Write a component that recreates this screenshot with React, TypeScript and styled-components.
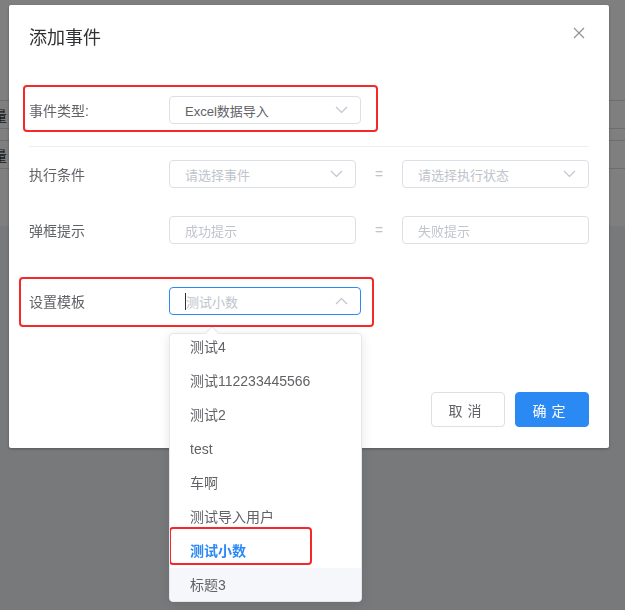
import React from "react";
import styled, { createGlobalStyle } from "styled-components";

const GlobalStyle = createGlobalStyle`
  html, body {
    margin: 0;
    padding: 0;
    width: 625px;
    height: 610px;
    overflow: hidden;
    font-family: "Liberation Sans", "Noto Sans CJK SC", sans-serif;
  }
`;

const BLUE = "#2b89f4";
const RED = "#f5282a";

const Page = styled.div`
  width: 625px;
  height: 610px;
  display: flex;
  flex-direction: column;
  background: #ffffff;
`;

const PageTop = styled.div`
  height: 226px;
  padding-top: 100px;
  box-sizing: border-box;
`;

const PageRow = styled.div<{ $gap?: number }>`
  height: 29px;
  margin-top: ${(p) => p.$gap || 0}px;
  border-top: 1px solid #d8dbe0;
  border-bottom: 1px solid #d8dbe0;
  box-sizing: border-box;
  display: flex;
  align-items: center;
  font-size: 14px;
  color: #333;
  margin-left: -7px;
`;

const PageBottom = styled.div`
  flex: 1;
  background: #f0f2f5;
`;

const Mask = styled.div`
  position: fixed;
  inset: 0;
  background: rgba(0, 0, 0, 0.5);
`;

const DialogLayer = styled.div`
  position: fixed;
  inset: 0;
  padding: 5px 0 0 9px;
`;

const Dialog = styled.div`
  width: 600px;
  background: #fff;
  border-radius: 2px;
  box-shadow: 0 1px 3px rgba(0, 0, 0, 0.3);
  padding: 0 20px 21px;
  box-sizing: border-box;
`;

const Header = styled.div`
  display: flex;
  justify-content: space-between;
  align-items: flex-start;
  padding-top: 20px;
  height: 46px;
`;

const Title = styled.div`
  font-size: 18px;
  line-height: 26px;
  color: #303133;
`;

const Close = styled.div`
  width: 26px;
  height: 26px;
  display: flex;
  align-items: center;
  justify-content: center;
  margin-top: -5px;
  margin-right: -3px;
`;

const Row = styled.div<{ $top: number }>`
  position: relative;
  display: flex;
  align-items: center;
  height: 28px;
  margin-top: ${(p) => p.$top}px;
`;

const Label = styled.div`
  width: 140px;
  font-size: 14px;
  color: #606266;
  flex-shrink: 0;
`;

const Field = styled.div<{ $w: number; $focus?: boolean }>`
  position: relative;
  width: ${(p) => p.$w}px;
  height: 28px;
  border: 1px solid ${(p) => (p.$focus ? BLUE : "#dcdfe6")};
  border-radius: 4px;
  box-sizing: border-box;
  display: flex;
  align-items: center;
  justify-content: space-between;
  padding: 0 12px 0 15px;
  font-size: 13px;
  background: #fff;
`;

const Value = styled.span<{ $ph?: boolean }>`
  color: ${(p) => (p.$ph ? "#c0c4cc" : "#606266")};
  display: flex;
  align-items: center;
`;

const Caret = styled.span`
  display: inline-block;
  width: 1px;
  height: 17px;
  background: #303133;
`;

const Equal = styled.div`
  width: 46px;
  text-align: center;
  color: #c0c4cc;
  font-size: 14px;
`;

const Divider = styled.div`
  height: 1px;
  background: #ebeef5;
  margin-top: 22px;
`;

const Highlight = styled.div<{ $l: number; $t: number; $w: number; $h: number }>`
  position: absolute;
  left: ${(p) => p.$l}px;
  top: ${(p) => p.$t}px;
  width: ${(p) => p.$w}px;
  height: ${(p) => p.$h}px;
  border: 2px solid ${RED};
  border-radius: 4px;
  box-sizing: border-box;
  pointer-events: none;
  z-index: 3;
`;

const Footer = styled.div`
  display: flex;
  justify-content: flex-end;
  gap: 10px;
  margin-top: 77px;
`;

const Button = styled.button<{ $primary?: boolean }>`
  width: 74px;
  height: 35px;
  border-radius: 4px;
  font-family: "Liberation Sans", "Noto Sans CJK SC", sans-serif;
  font-size: 14px;
  letter-spacing: 5px;
  padding-left: 5px;
  border: 1px solid ${(p) => (p.$primary ? BLUE : "#dcdfe6")};
  background: ${(p) => (p.$primary ? BLUE : "#fff")};
  color: ${(p) => (p.$primary ? "#fff" : "#606266")};
  font-weight: 400;
`;

const Dropdown = styled.div`
  position: absolute;
  left: -1px;
  top: 45px;
  width: 193px;
  height: 269px;
  background: #fff;
  border: 1px solid #e4e7ed;
  border-radius: 4px;
  box-shadow: 0 2px 12px rgba(0, 0, 0, 0.1);
  box-sizing: border-box;
  z-index: 2;
`;

const Arrow = styled.div`
  position: absolute;
  top: -6px;
  left: 37px;
  width: 9px;
  height: 9px;
  background: #fff;
  border-left: 1px solid #e4e7ed;
  border-top: 1px solid #e4e7ed;
  transform: rotate(45deg);
`;

const ListClip = styled.div`
  height: 100%;
  overflow: hidden;
  border-radius: 4px;
`;

const List = styled.ul`
  list-style: none;
  margin: -4px 0 0;
  padding: 0;
`;

const Item = styled.li<{ $selected?: boolean; $hover?: boolean }>`
  position: relative;
  height: 34px;
  line-height: 34px;
  padding: 0 20px;
  font-size: 14px;
  color: ${(p) => (p.$selected ? BLUE : "#606266")};
  font-weight: ${(p) => (p.$selected ? 700 : 400)};
  background: ${(p) => (p.$hover ? "#f5f7fa" : "transparent")};
`;

const Chevron = ({ up }: { up?: boolean }) => (
  <svg width="13" height="8" viewBox="0 0 13 8">
    <polyline
      points={up ? "1,7 6.5,1.5 12,7" : "1,1 6.5,6.5 12,1"}
      fill="none"
      stroke="#c0c4cc"
      strokeWidth="1.2"
    />
  </svg>
);

const options = [
  "测试4",
  "测试112233445566",
  "测试2",
  "test",
  "车啊",
  "测试导入用户",
  "测试小数",
  "标题3",
];

export default function App() {
  return (
    <>
      <GlobalStyle />
      <Page>
        <PageTop>
          <PageRow>量</PageRow>
          <PageRow $gap={11}>量</PageRow>
        </PageTop>
        <PageBottom />
      </Page>
      <Mask />
      <DialogLayer>
        <Dialog>
          <Header>
            <Title>添加事件</Title>
            <Close>
              <svg width="12" height="12" viewBox="0 0 12 12">
                <path d="M1 1L11 11M11 1L1 11" stroke="#909399" strokeWidth="1.2" />
              </svg>
            </Close>
          </Header>

          <Row $top={25}>
            <Highlight $l={-6} $t={-11} $w={355} $h={47} />
            <Label>事件类型:</Label>
            <Field $w={192}>
              <Value>Excel数据导入</Value>
              <Chevron />
            </Field>
          </Row>

          <Divider />

          <Row $top={13}>
            <Label>执行条件</Label>
            <Field $w={187}>
              <Value $ph>请选择事件</Value>
              <Chevron />
            </Field>
            <Equal>=</Equal>
            <Field $w={187}>
              <Value $ph>请选择执行状态</Value>
              <Chevron />
            </Field>
          </Row>

          <Row $top={28}>
            <Label>弹框提示</Label>
            <Field $w={187}>
              <Value $ph>成功提示</Value>
            </Field>
            <Equal>=</Equal>
            <Field $w={187}>
              <Value $ph>失败提示</Value>
            </Field>
          </Row>

          <Row $top={43}>
            <Highlight $l={-10} $t={-10} $w={355} $h={50} />
            <Label>设置模板</Label>
            <Field $w={192} $focus>
              <Value $ph>
                <Caret />
                测试小数
              </Value>
              <Chevron up />
              <Dropdown>
                <Arrow />
                <ListClip>
                  <List>
                    {options.map((o) => (
                      <Item key={o} $selected={o === "测试小数"} $hover={o === "标题3"}>
                        {o === "测试小数" && <Highlight $l={-1} $t={-7} $w={143} $h={38} />}
                        {o}
                      </Item>
                    ))}
                  </List>
                </ListClip>
              </Dropdown>
            </Field>
          </Row>

          <Footer>
            <Button>取消</Button>
            <Button $primary>确定</Button>
          </Footer>
        </Dialog>
      </DialogLayer>
    </>
  );
}
